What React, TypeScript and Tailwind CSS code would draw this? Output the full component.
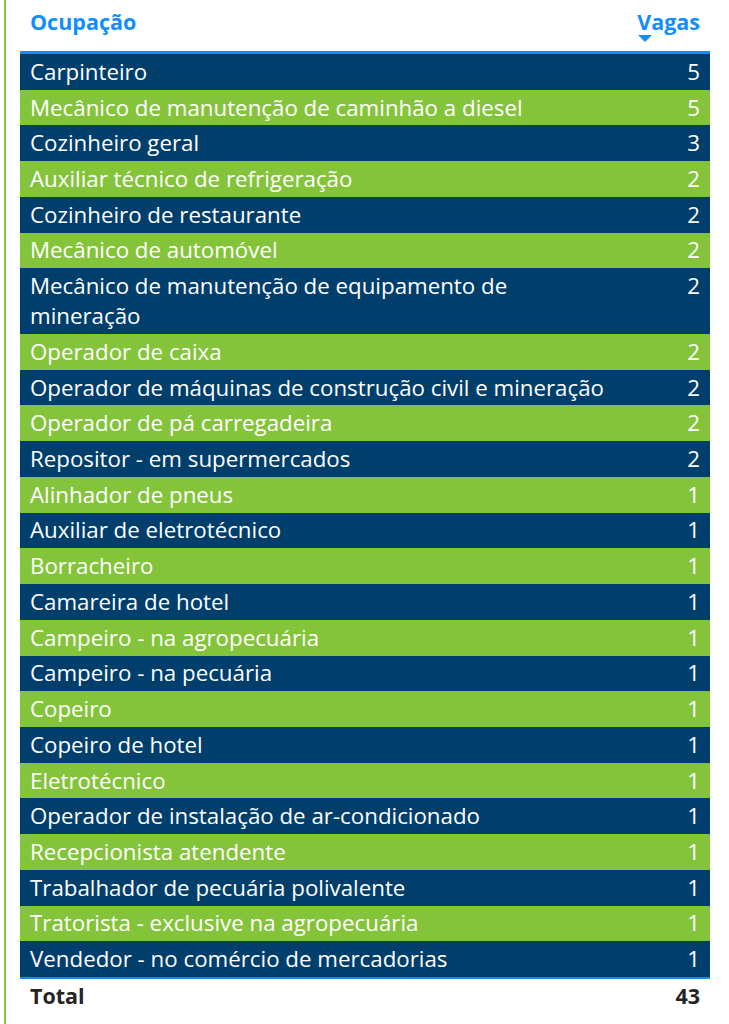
import React from "react"

const rows: [string, number][] = [
  ["Carpinteiro", 5],
  ["Mecânico de manutenção de caminhão a diesel", 5],
  ["Cozinheiro geral", 3],
  ["Auxiliar técnico de refrigeração", 2],
  ["Cozinheiro de restaurante", 2],
  ["Mecânico de automóvel", 2],
  ["Mecânico de manutenção de equipamento de mineração", 2],
  ["Operador de caixa", 2],
  ["Operador de máquinas de construção civil e mineração", 2],
  ["Operador de pá carregadeira", 2],
  ["Repositor - em supermercados", 2],
  ["Alinhador de pneus", 1],
  ["Auxiliar de eletrotécnico", 1],
  ["Borracheiro", 1],
  ["Camareira de hotel", 1],
  ["Campeiro - na agropecuária", 1],
  ["Campeiro - na pecuária", 1],
  ["Copeiro", 1],
  ["Copeiro de hotel", 1],
  ["Eletrotécnico", 1],
  ["Operador de instalação de ar-condicionado", 1],
  ["Recepcionista atendente", 1],
  ["Trabalhador de pecuária polivalente", 1],
  ["Tratorista - exclusive na agropecuária", 1],
  ["Vendedor - no comércio de mercadorias", 1],
]

export default function App() {
  const total = rows.reduce((s, r) => s + r[1], 0)

  return (
    <div className="w-[729px] h-[1024px] bg-white flex" style={{ fontFamily: "'Open Sans', 'Noto Sans', sans-serif" }}>
      <div className="w-[4px] shrink-0" />
      <div className="w-[2px] shrink-0 bg-[#8cc63f]" />
      <div className="flex-1 pl-[14px] pr-[19px]">
        <div className="flex items-start justify-between h-[51px] pt-[6px] px-[10px] text-[#118dff] font-bold text-[21.5px] leading-[32px]">
          <span>Ocupação</span>
          <div className="flex flex-col items-start">
            <span>Vagas</span>
            <svg width="14" height="8" viewBox="0 0 14 8" className="-mt-[3px] ml-[1px]">
              <path d="M0 0 L14 0 L7 7 Z" fill="#118dff" />
            </svg>
          </div>
        </div>
        <div className="border-t-[3px] border-[#118dff]">
          {rows.map(([name, n], i) => (
            <div
              key={name}
              className={`flex justify-between gap-4 px-[10px] py-[2.86px] text-white text-[22.3px] leading-[30px] ${
                i % 2 === 0 ? "bg-[#003e6b]" : "bg-[#84c43b]"
              }`}
            >
              <span className="max-w-[590px]">{name}</span>
              <span>{n}</span>
            </div>
          ))}
        </div>
        <div className="flex justify-between border-t-[2px] border-[#118dff] px-[10px] text-[#252423] font-bold text-[21.5px] leading-[34px]">
          <span>Total</span>
          <span>{total}</span>
        </div>
      </div>
    </div>
  )
}
